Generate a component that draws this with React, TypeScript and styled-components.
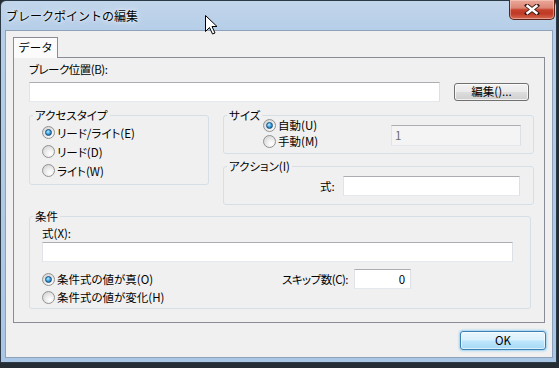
import React from "react";
import styled, { createGlobalStyle } from "styled-components";

const FONT = `"Noto Sans CJK JP", "Noto Sans", sans-serif`;
const FS = "11.5px";

const Global = createGlobalStyle`
  html, body { margin: 0; padding: 0; background: #262c33; }
  body { width: 559px; height: 368px; overflow: hidden; font-family: ${FONT}; font-size: ${FS}; color: #000; }
  #root { width: 559px; height: 368px; position: relative; }
`;

const Window = styled.div`
  position: relative;
  width: 557px;
  height: 363px;
  box-sizing: border-box;
  border: 1px solid #2c3a48;
  border-radius: 6px 6px 0 0;
  background: linear-gradient(180deg, #c2d6eb 0px, #b6cee8 28px, #a9c6e5 100%);
  display: flex;
  flex-direction: column;
`;

const TitleBar = styled.div`
  flex: 0 0 29px;
  display: flex;
  align-items: flex-start;
`;

const Title = styled.div`
  padding-left: 5px;
  line-height: 29px;
  font-size: 12px;
  color: #000;
  text-shadow: 0 0 6px rgba(255, 255, 255, 0.95), 0 0 2px rgba(255, 255, 255, 0.9);
`;

const CloseBtn = styled.div`
  width: 46px;
  height: 20px;
  margin: -1px 1px 0 auto;
  box-sizing: border-box;
  border: 1px solid #5a2219;
  border-top: none;
  border-radius: 0 0 5px 5px;
  background: linear-gradient(180deg, #eaa89a 0%, #dc8675 42%, #c5412b 52%, #c03a25 72%, #d66a52 100%);
  box-shadow: inset 0 0 0 1px rgba(255, 220, 210, 0.45);
  display: flex;
  align-items: center;
  justify-content: center;
`;

const Client = styled.div`
  flex: 0 0 328px;
  margin: 0 3px 0 4px;
  box-sizing: border-box;
  border: 1px solid #8ea3ba;
  background: #f0f0f0;
  padding: 6px 0 0 7px;
  display: flex;
  flex-direction: column;
`;

const TabStrip = styled.div`
  display: flex;
  height: 20px;
`;

const Tab = styled.div`
  position: relative;
  z-index: 1;
  width: 45px;
  height: 21px;
  box-sizing: border-box;
  border: 1px solid #898c95;
  border-bottom: none;
  background: #fbfbfb;
  font-size: ${FS};
  line-height: 18px;
  text-align: center;
`;

const Panel = styled.div`
  width: 532px;
  height: 266px;
  box-sizing: border-box;
  border: 1px solid #898c95;
  background: #f0f0f0;
  padding: 4px 0 0 15px;
  display: flex;
  flex-direction: column;
`;

const Label = styled.div<{ $tight?: boolean }>`
  line-height: 14px;
  font-size: ${FS};
  font-feature-settings: "palt";
  letter-spacing: ${(p) => (p.$tight ? "-0.5px" : "0")};
  white-space: nowrap;
`;

const Row = styled.div<{ $mt?: number; $gap?: number }>`
  display: flex;
  align-items: center;
  margin-top: ${(p) => p.$mt ?? 0}px;
  gap: ${(p) => p.$gap ?? 0}px;
`;

const TextBox = styled.div<{ $w: number; $h?: number; $right?: boolean; $disabled?: boolean }>`
  width: ${(p) => p.$w}px;
  height: ${(p) => p.$h ?? 20}px;
  box-sizing: border-box;
  border: 1px solid;
  border-color: #abadb3 #dbdfe6 #e3e9ef #e2e3ea;
  background: ${(p) => (p.$disabled ? "#f4f4f4" : "#ffffff")};
  color: ${(p) => (p.$disabled ? "#6d6d6d" : "#000")};
  font-size: ${FS};
  line-height: 16px;
  padding: 1px 5px 0 3px;
  text-align: ${(p) => (p.$right ? "right" : "left")};
  flex: none;
`;

const Button = styled.div`
  width: 75px;
  height: 18px;
  box-sizing: border-box;
  border: 1px solid #707070;
  border-radius: 3px;
  background: linear-gradient(180deg, #f2f2f2 0%, #ebebeb 48%, #dddddd 52%, #cfcfcf 100%);
  box-shadow: inset 0 0 0 1px rgba(255, 255, 255, 0.7);
  font-size: ${FS};
  line-height: 15px;
  text-align: center;
  font-feature-settings: "palt";
  flex: none;
`;

const DefaultButton = styled(Button)`
  width: 86px;
  height: 19px;
  border-color: #3c7fb1;
  background: linear-gradient(180deg, #eaf6fd 0%, #d9f0fc 48%, #bee6fd 52%, #a7d9f5 100%);
  box-shadow: inset 0 0 0 1px rgba(255, 255, 255, 0.6), 0 0 2px 1px rgba(120, 200, 245, 0.7);
  line-height: 16px;
`;

const Middle = styled.div`
  display: flex;
  gap: 14px;
  margin-top: 13px;
  align-items: flex-start;
`;

const Column = styled.div`
  display: flex;
  flex-direction: column;
  gap: 12px;
`;

const Group = styled.div<{ $w: number; $h: number; $pl?: number; $pt?: number }>`
  position: relative;
  box-sizing: border-box;
  width: ${(p) => p.$w}px;
  height: ${(p) => p.$h}px;
  border: 1px solid #d5dfe5;
  border-radius: 3px;
  padding: ${(p) => p.$pt ?? 0}px 0 0 ${(p) => p.$pl ?? 0}px;
  display: flex;
  flex-direction: column;
`;

const Legend = styled.span`
  position: absolute;
  top: -8px;
  left: 3px;
  padding: 0 2px;
  background: #f0f0f0;
  line-height: 14px;
  font-size: ${FS};
  font-feature-settings: "palt";
  white-space: nowrap;
`;

const RadioList = styled.div<{ $w?: number }>`
  display: flex;
  flex-direction: column;
  width: ${(p) => (p.$w ? `${p.$w}px` : "auto")};
  flex: none;
`;

const RadioRow = styled.div<{ $h: number }>`
  display: flex;
  align-items: center;
  gap: 2px;
  height: ${(p) => p.$h}px;
  font-size: ${FS};
  font-feature-settings: "palt";
  white-space: nowrap;
`;

const RadioDot = styled.span<{ $checked?: boolean }>`
  width: 13px;
  height: 13px;
  border-radius: 50%;
  box-sizing: border-box;
  border: 1px solid #929292;
  background: radial-gradient(circle at 65% 70%, #ffffff 0%, #f0f0f0 35%, #d6d6d6 80%, #c8c8c8 100%);
  display: inline-flex;
  align-items: center;
  justify-content: center;
  flex: none;
  &::after {
    content: "";
    display: ${(p) => (p.$checked ? "block" : "none")};
    width: 7px;
    height: 7px;
    border-radius: 50%;
    box-sizing: border-box;
    border: 1px solid #1a4d78;
    background: radial-gradient(circle at 40% 35%, #c8ecff 0%, #4ab0ec 40%, #1c6cac 80%, #12507f 100%);
  }
`;

const SizeBody = styled.div`
  display: flex;
  align-items: flex-start;
`;

const Footer = styled.div`
  display: flex;
  justify-content: flex-end;
  margin-top: 8px;
  padding-right: 6px;
`;

const Cursor = styled.svg`
  position: absolute;
  left: 204px;
  top: 14px;
`;

function Radio({ label, checked, h }: { label: string; checked?: boolean; h: number }) {
  return (
    <RadioRow $h={h}>
      <RadioDot $checked={checked} />
      <span>{label}</span>
    </RadioRow>
  );
}

export default function App() {
  return (
    <>
      <Global />
      <Window>
        <TitleBar>
          <Title>ブレークポイントの編集</Title>
          <CloseBtn>
            <svg width="16" height="11" viewBox="0 0 16 11">
              <path d="M3 1.5 L13 9.5 M13 1.5 L3 9.5" stroke="#3b1a14" strokeWidth="4.2" strokeLinecap="square" />
              <path d="M3.5 2 L12.5 9 M12.5 2 L3.5 9" stroke="#ffffff" strokeWidth="2.4" strokeLinecap="square" />
            </svg>
          </CloseBtn>
        </TitleBar>
        <Client>
          <TabStrip>
            <Tab>データ</Tab>
          </TabStrip>
          <Panel>
            <Label $tight>ブレーク位置(B):</Label>
            <Row $mt={6} $gap={14}>
              <TextBox $w={411} />
              <Button>編集()...</Button>
            </Row>
            <Middle>
              <Group $w={180} $h={70} $pl={12} $pt={7}>
                <Legend>アクセスタイプ</Legend>
                <RadioList>
                  <Radio h={19} label="リード/ライト(E)" checked />
                  <Radio h={19} label="リード(D)" />
                  <Radio h={19} label="ライト(W)" />
                </RadioList>
              </Group>
              <Column>
                <Group $w={311} $h={39} $pl={39} $pt={1}>
                  <Legend>サイズ</Legend>
                  <SizeBody>
                    <RadioList $w={128}>
                      <Radio h={16} label="自動(U)" checked />
                      <Radio h={16} label="手動(M)" />
                    </RadioList>
                    <TextBox $w={130} $h={21} $disabled style={{ marginTop: 8 }}>
                      1
                    </TextBox>
                  </SizeBody>
                </Group>
                <Group $w={311} $h={39} $pl={96} $pt={9}>
                  <Legend>アクション(I)</Legend>
                  <Row $gap={8}>
                    <Label>式:</Label>
                    <TextBox $w={177} />
                  </Row>
                </Group>
              </Column>
            </Middle>
            <Group $w={502} $h={93} $pl={12} $pt={9} style={{ marginTop: 11 }}>
              <Legend>条件</Legend>
              <Label>式(X):</Label>
              <TextBox $w={471} style={{ marginTop: 2 }} />
              <Row $mt={7}>
                <RadioList $w={240} style={{ alignSelf: "flex-start", paddingTop: 1 }}>
                  <Radio h={18} label="条件式の値が真(O)" checked />
                  <Radio h={18} label="条件式の値が変化(H)" />
                </RadioList>
                <Row $gap={6} style={{ alignSelf: "flex-start" }}>
                  <Label $tight>スキップ数(C):</Label>
                  <TextBox $w={57} $right>
                    0
                  </TextBox>
                </Row>
              </Row>
            </Group>
          </Panel>
          <Footer>
            <DefaultButton>OK</DefaultButton>
          </Footer>
        </Client>
        <Cursor width="13" height="20" viewBox="0 0 13 20">
          <path d="M0.5 0.5 L0.5 16.5 L4.5 12.5 L7.5 19 L10 18 L7 11.5 L12 11.5 Z" fill="#ffffff" stroke="#000" strokeWidth="1" />
        </Cursor>
      </Window>
    </>
  );
}
